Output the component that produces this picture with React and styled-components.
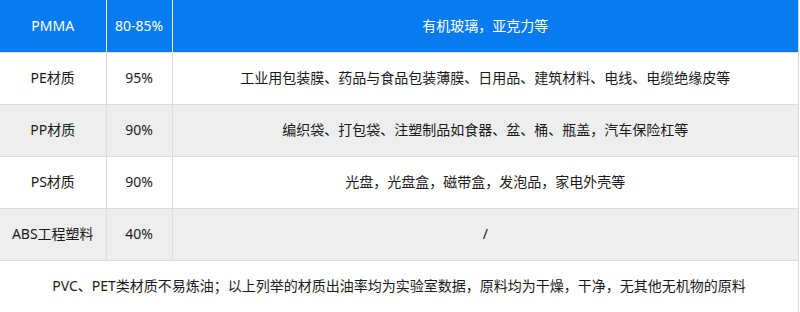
import React from "react";
import styled, { createGlobalStyle } from "styled-components";

const GlobalStyle = createGlobalStyle`
  html, body {
    margin: 0;
    padding: 0;
    background: #fff;
  }
  body {
    font-family: "Noto Sans", "Noto Sans CJK SC", sans-serif;
  }
`;

const Table = styled.table`
  width: 799px;
  border-collapse: collapse;
  table-layout: fixed;
  font-size: 14px;
  color: #1a1a1a;
`;

const Row = styled.tr`
  height: 52px;
  background: ${({ $head, $shade }) =>
    $head ? "#077bf0" : $shade ? "#eeeeee" : "#ffffff"};
  color: ${({ $head }) => ($head ? "#ffffff" : "#1a1a1a")};
`;

const Cell = styled.td`
  border: 1px solid #dcdcdc;
  border-top: none;
  text-align: center;
  vertical-align: middle;
  padding: 0;
  line-height: 20px;
  white-space: nowrap;
  &:first-child {
    border-left: none;
  }
`;

const HeadCell = styled(Cell)`
  border-right-color: ${({ $last }) => ($last ? "#dcdcdc" : "#e6f0fc")};
`;

const rows = [
  ["PE材质", "95%", "工业用包装膜、药品与食品包装薄膜、日用品、建筑材料、电线、电缆绝缘皮等"],
  ["PP材质", "90%", "编织袋、打包袋、注塑制品如食器、盆、桶、瓶盖，汽车保险杠等"],
  ["PS材质", "90%", "光盘，光盘盒，磁带盒，发泡品，家电外壳等"],
  ["ABS工程塑料", "40%", "/"],
];

const App = () => {
  return (
    <>
      <GlobalStyle />
      <Table>
        <colgroup>
          <col style={{ width: 106 }} />
          <col style={{ width: 66 }} />
          <col />
        </colgroup>
        <tbody>
          <Row $head>
            <HeadCell>PMMA</HeadCell>
            <HeadCell>80-85%</HeadCell>
            <HeadCell $last>有机玻璃，亚克力等</HeadCell>
          </Row>
          {rows.map((r, i) => (
            <Row key={r[0]} $shade={i % 2 === 1}>
              <Cell>{r[0]}</Cell>
              <Cell>{r[1]}</Cell>
              <Cell>{r[2]}</Cell>
            </Row>
          ))}
          <Row>
            <Cell colSpan={3}>
              PVC、PET类材质不易炼油；以上列举的材质出油率均为实验室数据，原料均为干燥，干净，无其他无机物的原料
            </Cell>
          </Row>
        </tbody>
      </Table>
    </>
  );
};

export default App;
